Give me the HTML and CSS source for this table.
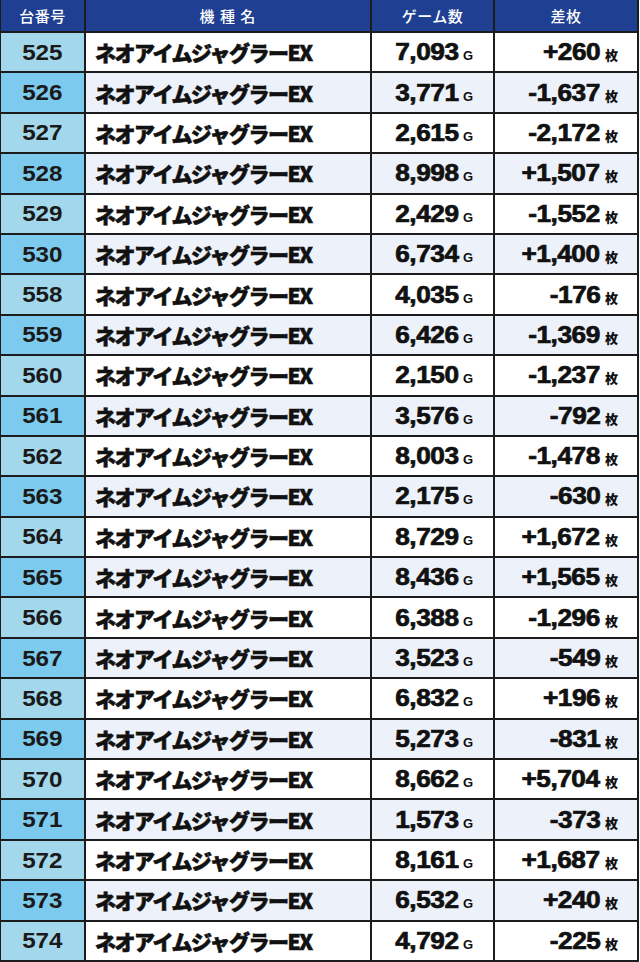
FILE: index.html
```html
<!DOCTYPE html>
<html lang="ja">
<head>
<meta charset="utf-8">
<title>台番号一覧</title>
<link rel="stylesheet" href="styles.css">
</head>
<body>
<div class="sheet">
  <div class="hd">台番号</div>
  <div class="hd hd-name">機 種 名</div>
  <div class="hd">ゲーム数</div>
  <div class="hd">差枚</div>

  <div class="no"><span class="num">525</span></div><div class="name">ネオアイムジャグラーEX</div><div class="games"><span class="v"><span class="num">7,093</span><span class="u">G</span></span></div><div class="diff"><span class="v"><span class="num">+260</span><span class="u">枚</span></span></div>
  <div class="no alt"><span class="num">526</span></div><div class="name alt">ネオアイムジャグラーEX</div><div class="games alt"><span class="v"><span class="num">3,771</span><span class="u">G</span></span></div><div class="diff alt"><span class="v"><span class="num">-1,637</span><span class="u">枚</span></span></div>
  <div class="no"><span class="num">527</span></div><div class="name">ネオアイムジャグラーEX</div><div class="games"><span class="v"><span class="num">2,615</span><span class="u">G</span></span></div><div class="diff"><span class="v"><span class="num">-2,172</span><span class="u">枚</span></span></div>
  <div class="no alt"><span class="num">528</span></div><div class="name alt">ネオアイムジャグラーEX</div><div class="games alt"><span class="v"><span class="num">8,998</span><span class="u">G</span></span></div><div class="diff alt"><span class="v"><span class="num">+1,507</span><span class="u">枚</span></span></div>
  <div class="no"><span class="num">529</span></div><div class="name">ネオアイムジャグラーEX</div><div class="games"><span class="v"><span class="num">2,429</span><span class="u">G</span></span></div><div class="diff"><span class="v"><span class="num">-1,552</span><span class="u">枚</span></span></div>
  <div class="no alt"><span class="num">530</span></div><div class="name alt">ネオアイムジャグラーEX</div><div class="games alt"><span class="v"><span class="num">6,734</span><span class="u">G</span></span></div><div class="diff alt"><span class="v"><span class="num">+1,400</span><span class="u">枚</span></span></div>
  <div class="no"><span class="num">558</span></div><div class="name">ネオアイムジャグラーEX</div><div class="games"><span class="v"><span class="num">4,035</span><span class="u">G</span></span></div><div class="diff"><span class="v"><span class="num">-176</span><span class="u">枚</span></span></div>
  <div class="no alt"><span class="num">559</span></div><div class="name alt">ネオアイムジャグラーEX</div><div class="games alt"><span class="v"><span class="num">6,426</span><span class="u">G</span></span></div><div class="diff alt"><span class="v"><span class="num">-1,369</span><span class="u">枚</span></span></div>
  <div class="no"><span class="num">560</span></div><div class="name">ネオアイムジャグラーEX</div><div class="games"><span class="v"><span class="num">2,150</span><span class="u">G</span></span></div><div class="diff"><span class="v"><span class="num">-1,237</span><span class="u">枚</span></span></div>
  <div class="no alt"><span class="num">561</span></div><div class="name alt">ネオアイムジャグラーEX</div><div class="games alt"><span class="v"><span class="num">3,576</span><span class="u">G</span></span></div><div class="diff alt"><span class="v"><span class="num">-792</span><span class="u">枚</span></span></div>
  <div class="no"><span class="num">562</span></div><div class="name">ネオアイムジャグラーEX</div><div class="games"><span class="v"><span class="num">8,003</span><span class="u">G</span></span></div><div class="diff"><span class="v"><span class="num">-1,478</span><span class="u">枚</span></span></div>
  <div class="no alt"><span class="num">563</span></div><div class="name alt">ネオアイムジャグラーEX</div><div class="games alt"><span class="v"><span class="num">2,175</span><span class="u">G</span></span></div><div class="diff alt"><span class="v"><span class="num">-630</span><span class="u">枚</span></span></div>
  <div class="no"><span class="num">564</span></div><div class="name">ネオアイムジャグラーEX</div><div class="games"><span class="v"><span class="num">8,729</span><span class="u">G</span></span></div><div class="diff"><span class="v"><span class="num">+1,672</span><span class="u">枚</span></span></div>
  <div class="no alt"><span class="num">565</span></div><div class="name alt">ネオアイムジャグラーEX</div><div class="games alt"><span class="v"><span class="num">8,436</span><span class="u">G</span></span></div><div class="diff alt"><span class="v"><span class="num">+1,565</span><span class="u">枚</span></span></div>
  <div class="no"><span class="num">566</span></div><div class="name">ネオアイムジャグラーEX</div><div class="games"><span class="v"><span class="num">6,388</span><span class="u">G</span></span></div><div class="diff"><span class="v"><span class="num">-1,296</span><span class="u">枚</span></span></div>
  <div class="no alt"><span class="num">567</span></div><div class="name alt">ネオアイムジャグラーEX</div><div class="games alt"><span class="v"><span class="num">3,523</span><span class="u">G</span></span></div><div class="diff alt"><span class="v"><span class="num">-549</span><span class="u">枚</span></span></div>
  <div class="no"><span class="num">568</span></div><div class="name">ネオアイムジャグラーEX</div><div class="games"><span class="v"><span class="num">6,832</span><span class="u">G</span></span></div><div class="diff"><span class="v"><span class="num">+196</span><span class="u">枚</span></span></div>
  <div class="no alt"><span class="num">569</span></div><div class="name alt">ネオアイムジャグラーEX</div><div class="games alt"><span class="v"><span class="num">5,273</span><span class="u">G</span></span></div><div class="diff alt"><span class="v"><span class="num">-831</span><span class="u">枚</span></span></div>
  <div class="no"><span class="num">570</span></div><div class="name">ネオアイムジャグラーEX</div><div class="games"><span class="v"><span class="num">8,662</span><span class="u">G</span></span></div><div class="diff"><span class="v"><span class="num">+5,704</span><span class="u">枚</span></span></div>
  <div class="no alt"><span class="num">571</span></div><div class="name alt">ネオアイムジャグラーEX</div><div class="games alt"><span class="v"><span class="num">1,573</span><span class="u">G</span></span></div><div class="diff alt"><span class="v"><span class="num">-373</span><span class="u">枚</span></span></div>
  <div class="no"><span class="num">572</span></div><div class="name">ネオアイムジャグラーEX</div><div class="games"><span class="v"><span class="num">8,161</span><span class="u">G</span></span></div><div class="diff"><span class="v"><span class="num">+1,687</span><span class="u">枚</span></span></div>
  <div class="no alt"><span class="num">573</span></div><div class="name alt">ネオアイムジャグラーEX</div><div class="games alt"><span class="v"><span class="num">6,532</span><span class="u">G</span></span></div><div class="diff alt"><span class="v"><span class="num">+240</span><span class="u">枚</span></span></div>
  <div class="no"><span class="num">574</span></div><div class="name">ネオアイムジャグラーEX</div><div class="games"><span class="v"><span class="num">4,792</span><span class="u">G</span></span></div><div class="diff"><span class="v"><span class="num">-225</span><span class="u">枚</span></span></div>
</div>
</body>
</html>
```
FILE: styles.css
```css
html, body {
  margin: 0;
  padding: 0;
  background: #ffffff;
}

.sheet {
  width: 639px;
  height: 962px;
  box-sizing: border-box;
  padding: 0 2px 2px 1px;
  background: #1c1c1c;
  display: grid;
  grid-template-columns: 83px 284px 121px 142px;
  grid-template-rows: 31px repeat(23, 1fr);
  column-gap: 2px;
  row-gap: 2px;
  font-family: "Liberation Sans", Arial, "Noto Sans CJK JP", sans-serif;
  color: #111111;
}

.hd {
  background: #1f3f93;
  color: #ffffff;
  font-family: "Noto Sans CJK JP", sans-serif;
  font-size: 15px;
  font-weight: 500;
  display: flex;
  align-items: center;
  justify-content: center;
  letter-spacing: 0.5px;
}

.hd-name {
  letter-spacing: 1px;
}

.no {
  background: #a3d8ec;
  display: flex;
  align-items: center;
  justify-content: center;
  font-size: 22px;
  font-weight: 700;
  color: #1a1a1a;
  padding-top: 1px;
}

.no .num {
  display: inline-block;
  transform: scaleX(1.1);
}

.no.alt {
  background: #7ccaed;
}

.name, .games, .diff {
  background: #ffffff;
  display: flex;
  align-items: center;
}

.name.alt, .games.alt, .diff.alt {
  background: #edf1f9;
}

.name {
  padding-left: 9px;
  font-family: "Noto Sans CJK JP", sans-serif;
  font-weight: 900;
  font-size: 21px;
  letter-spacing: -1.5px;
  -webkit-text-stroke: 0.6px #111111;
}

.games, .diff {
  justify-content: flex-end;
  font-size: 23px;
  font-weight: 700;
  padding-top: 1px;
}

.v {
  white-space: nowrap;
}

.games .num, .diff .num {
  display: inline-block;
  transform: scaleX(1.14);
  transform-origin: right center;
  letter-spacing: -0.4px;
  -webkit-text-stroke: 0.7px #111111;
}

.games {
  padding-right: 20px;
}

.diff {
  padding-right: 19px;
}

.u {
  font-family: "Liberation Sans", "Noto Sans CJK JP", sans-serif;
  font-size: 13px;
  font-weight: 700;
  margin-left: 4px;
}

.diff .u {
  font-family: "Noto Sans CJK JP", sans-serif;
  font-size: 13px;
  font-weight: 900;
  margin-left: 5px;
}
```
